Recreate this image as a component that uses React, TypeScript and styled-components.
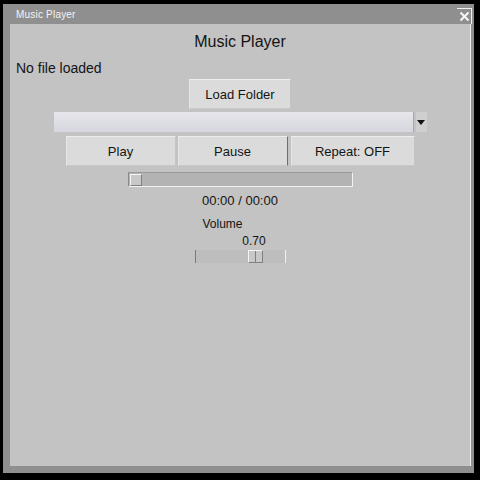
import React from "react";
import styled, { createGlobalStyle } from "styled-components";

const Global = createGlobalStyle`
  html, body { margin: 0; padding: 0; background: #000; }
  body { width: 480px; height: 480px; overflow: hidden; font-family: "Liberation Sans", Arial, sans-serif; }
`;

const Window = styled.div`
  margin: 4px 0 0 3px;
  width: 471px;
  height: 469px;
  background: #8f8f8f;
  display: flex;
  flex-direction: column;
`;

const TitleBar = styled.div`
  height: 20px;
  display: flex;
  align-items: center;
  justify-content: space-between;
  padding: 0 2px 0 13px;
`;

const TitleText = styled.span`
  color: #f4f4f4;
  font-size: 10px;
  letter-spacing: 0.2px;
`;

const CloseButton = styled.div`
  width: 14px;
  height: 15px;
  margin-top: 4px;
  border-top: 1px solid #f0f0f0;
  border-right: 1px solid #f0f0f0;
  display: flex;
  align-items: center;
  justify-content: center;
`;

const Content = styled.div`
  flex: 1;
  margin: 0 3px 7px 7px;
  background: #c3c3c3;
  border-right: 1px solid #f0f0f0;
  display: flex;
  flex-direction: column;
  align-items: center;
  color: #141414;
`;

const Heading = styled.div`
  margin-top: 8px;
  font-size: 16px;
  line-height: 20px;
`;

const Status = styled.div`
  align-self: flex-start;
  margin: 8px 0 0 6px;
  font-size: 14px;
  line-height: 16px;
`;

const Button = styled.div<{ $w: number }>`
  box-sizing: border-box;
  width: ${(p) => p.$w}px;
  height: 30px;
  background: #dbdbdb;
  border-top: 1px solid #ededed;
  border-left: 1px solid #e6e6e6;
  border-right: 1px solid #c4c4c4;
  border-bottom: 1px solid #c8c8c8;
  display: flex;
  align-items: center;
  justify-content: center;
  font-size: 13px;
  padding-top: 1px;
`;

const LoadButton = styled(Button)`
  margin-top: 3px;
`;

const Combo = styled.div`
  margin-top: 3px;
  width: 373px;
  height: 20px;
  display: flex;
  gap: 2px;
`;

const ComboEntry = styled.div`
  flex: 1;
  background: linear-gradient(#e6e6ec, #d6d6de);
  border-right: 1px solid #a8a8ae;
`;

const ComboArrow = styled.div`
  width: 11px;
  background: #cfcfcf;
  display: flex;
  align-items: center;
  justify-content: center;
`;

const ButtonRow = styled.div`
  margin-top: 4px;
  display: flex;
  gap: 2px;
`;

const PauseButton = styled(Button)`
  border-right: 1px solid #6e6e6e;
  margin-right: 1px;
`;

const Trough = styled.div<{ $w: number; $h: number }>`
  box-sizing: border-box;
  width: ${(p) => p.$w}px;
  height: ${(p) => p.$h}px;
  background: #b3b3b3;
  border-top: 1px solid #9a9a9a;
  border-left: 1px solid #8a8a8a;
  border-right: 1px solid #f2f2f2;
  border-bottom: 1px solid #f2f2f2;
  display: flex;
  align-items: center;
`;

const ProgressTrough = styled(Trough)`
  margin-top: 6px;
  padding-left: 1px;
`;

const Thumb = styled.div<{ $w: number; $h: number }>`
  box-sizing: border-box;
  width: ${(p) => p.$w}px;
  height: ${(p) => p.$h}px;
  background: #c8c8c8;
  border-top: 1px solid #f4f4f4;
  border-left: 1px solid #f4f4f4;
  border-right: 1px solid #808080;
  border-bottom: 1px solid #808080;
  display: flex;
  justify-content: center;
`;

const ThumbNotch = styled.div`
  width: 1px;
  height: 100%;
  background: #808080;
`;

const TimeLabel = styled.div`
  margin-top: 6px;
  font-size: 13px;
  line-height: 16px;
`;

const VolumeBox = styled.div`
  margin-top: 7px;
  width: 91px;
  display: flex;
  flex-direction: column;
`;

const VolumeLabel = styled.div`
  padding-left: 8px;
  font-size: 12px;
  line-height: 16px;
`;

const VolumeValue = styled.div`
  margin-top: 1px;
  width: 25px;
  text-align: center;
  font-size: 12px;
  line-height: 16px;
`;

const VolumeTrough = styled(Trough)`
  margin-top: 1px;
  border-top: none;
  border-bottom: none;
  background: #bdbdbd;
  border-left: 1px solid #7a7a7a;
`;

const X = () => (
  <svg width="11" height="11" viewBox="0 0 11 11">
    <path d="M1.5 1.5 L9.5 9.5 M9.5 1.5 L1.5 9.5" stroke="#f6f6f6" strokeWidth="2" />
  </svg>
);

const Down = () => (
  <svg width="8" height="5" viewBox="0 0 8 5">
    <path d="M0 0 H8 L4 5 Z" fill="#111" />
  </svg>
);

export default function App() {
  const volume = 0.7;
  const thumbLeft = 52 + (volume - 0.7) * 80;
  return (
    <>
      <Global />
      <Window>
        <TitleBar>
          <TitleText>Music Player</TitleText>
          <CloseButton>
            <X />
          </CloseButton>
        </TitleBar>
        <Content>
          <Heading>Music Player</Heading>
          <Status>No file loaded</Status>
          <LoadButton $w={102}>Load Folder</LoadButton>
          <Combo>
            <ComboEntry />
            <ComboArrow>
              <Down />
            </ComboArrow>
          </Combo>
          <ButtonRow>
            <Button $w={110}>Play</Button>
            <PauseButton $w={110}>Pause</PauseButton>
            <Button $w={124}>Repeat: OFF</Button>
          </ButtonRow>
          <ProgressTrough $w={225} $h={15}>
            <Thumb $w={12} $h={12} />
          </ProgressTrough>
          <TimeLabel>00:00 / 00:00</TimeLabel>
          <VolumeBox>
            <VolumeLabel>Volume</VolumeLabel>
            <VolumeValue style={{ marginLeft: thumbLeft - 5 }}>{volume.toFixed(2)}</VolumeValue>
            <VolumeTrough $w={91} $h={13}>
              <Thumb $w={15} $h={13} style={{ marginLeft: thumbLeft }}>
                <ThumbNotch />
              </Thumb>
            </VolumeTrough>
          </VolumeBox>
        </Content>
      </Window>
    </>
  );
}
